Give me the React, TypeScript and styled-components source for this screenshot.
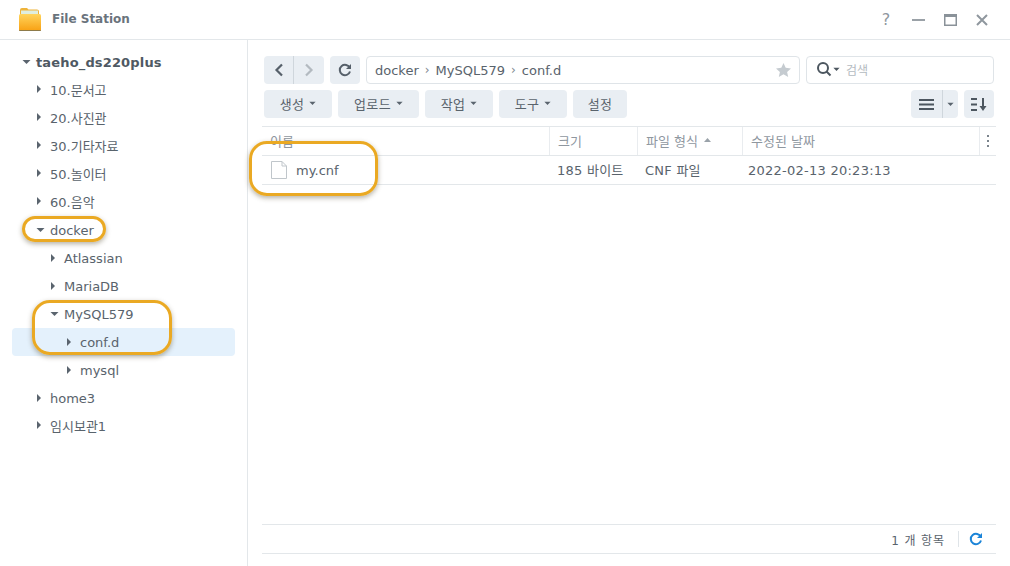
import React from "react";
import styled, { createGlobalStyle } from "styled-components";

const Global = createGlobalStyle`
  html, body { margin: 0; padding: 0; background: #fff; }
  body { font-family: "DejaVu Sans", "Noto Sans CJK KR", sans-serif; font-size: 13px; color: #4a5560; }
  * { box-sizing: border-box; }
`;
const Window = styled.div`
  position: relative; width: 1010px; height: 566px; display: flex; flex-direction: column; overflow: hidden; background: #fff;
`;
const TitleBar = styled.header`
  height: 40px; flex: none; display: flex; align-items: center; padding: 0 0 1px 18px; border-bottom: 1px solid #e3e7ea;
`;
const AppTitle = styled.div`
  margin-left: 10px; font-weight: 700; font-size: 12px; color: #6a737c; flex: 1;
`;
const WinButtons = styled.div`
  display: flex; align-items: center; padding: 2px 20px 0 0; gap: 16px;
`;
const WinButton = styled.span`
  width: 16px; height: 16px; display: flex; align-items: center; justify-content: center; color: #8f979e; font-size: 16px; line-height: 1;
`;
const Body = styled.div`
  flex: 1; display: flex; min-height: 0;
`;
const Sidebar = styled.nav`
  width: 248px; flex: none; border-right: 1px solid #e3e7ea; padding: 8px 12px 0;
`;
const TreeRow = styled.div<{ $depth: number; $selected?: boolean; $root?: boolean; $cjk?: boolean }>`
  height: 28px; display: flex; align-items: center; border-radius: 4px;
  padding-left: ${p => [10, 24, 38, 54][p.$depth]}px;
  padding-bottom: ${p => (p.$cjk ? 2 : 0)}px;
  background: ${p => (p.$selected ? "#e4f1fc" : "transparent")};
  font-weight: ${p => (p.$root ? 700 : 400)};
  color: ${p => (p.$root ? "#4f5963" : "#59636c")};
  font-size: 13px; letter-spacing: ${p => (p.$root ? ".15px" : "0")};
`;
const Caret = styled.span`
  width: 14px; flex: none; display: flex; align-items: center;
`;
const Main = styled.main`
  flex: 1; min-width: 0; display: flex; flex-direction: column; padding: 16px 14px 12px;
`;
const ToolRow = styled.div`
  display: flex; gap: 6px; height: 28px; margin: 0 2px 6px;
`;
const ToolButton = styled.button<{ $w: number; $cjk?: boolean }>`
  width: ${p => p.$w}px; height: 28px; border: 0; border-radius: 4px; background: #e9eef3; color: #59636c; padding: 0 0 ${p => (p.$cjk ? 2 : 0)}px;
  font: inherit; font-size: 13px; letter-spacing: .3px; display: flex; align-items: center; justify-content: center; gap: 5px; flex: none;
`;
const SplitButton = styled(ToolButton)`
  gap: 0;
`;
const SplitLine = styled.span`
  width: 1px; height: 28px; background: #cfd6dc; flex: none;
`;
const Segment = styled.span<{ $w: number }>`
  width: ${p => p.$w}px; height: 28px; display: flex; align-items: center; justify-content: center; flex: none;
`;
const Path = styled.div`
  flex: 1; height: 28px; border: 1px solid #dfe4e8; border-radius: 4px; display: flex; align-items: center; padding: 0 8px; gap: 6px;
  color: #59636c; font-size: 13px;
`;
const PathSep = styled.span`
  color: #7e8790; font-size: 12px;
`;
const Star = styled.span`
  margin-left: auto; display: flex;
`;
const SearchBox = styled.div`
  width: 188px; height: 28px; flex: none; border: 1px solid #dfe4e8; border-radius: 4px; display: flex; align-items: center; padding: 0 0 2px 9px; color: #b4bbc1; font-size: 12px;
`;
const SearchCaret = styled.span`
  margin-left: 1px; display: flex;
`;
const SearchText = styled.span`
  margin-left: 6px;
`;
const Spacer = styled.div`
  flex: 1;
`;
const Grid = styled.div`
  flex: 1; margin-top: 2px; display: flex; flex-direction: column; min-height: 0;
`;
const HeaderRow = styled.div`
  height: 30px; flex: none; display: grid; grid-template-columns: 288px 88px 105px 237px 16px; border-top: 1px solid #e3e7ea; border-bottom: 1px solid #e3e7ea;
`;
const HeadCell = styled.div`
  display: flex; align-items: center; padding: 0 0 2px 8px; color: #8f979f; font-size: 13px; border-right: 1px solid #e9ecef; gap: 6px;
  &:last-child { border-right: 0; padding: 0; justify-content: center; }
`;
const DataRow = styled.div`
  height: 29px; flex: none; display: grid; grid-template-columns: 288px 88px 105px 237px 16px; border-bottom: 1px solid #e3e7ea; color: #59636c;
`;
const DataCell = styled.div`
  display: flex; align-items: center; padding: 0 0 2px 7px; font-size: 13px; letter-spacing: .25px; white-space: nowrap;
`;
const DateCell = styled(DataCell)`
  padding: 0 0 0 5px;
`;
const NameCell = styled(DataCell)`
  padding: 0 0 0 9px; gap: 9px; letter-spacing: 0;
`;
const Footer = styled.footer`
  margin-top: auto; height: 30px; flex: none; border-top: 1px solid #e3e7ea; border-bottom: 1px solid #e3e7ea; display: flex; align-items: center; justify-content: flex-end; padding-right: 13px; font-size: 12px; color: #59636c; letter-spacing: .9px;
`;
const FootSep = styled.span`
  width: 1px; height: 16px; background: #dfe4e8; margin: 0 10px 0 13px;
`;
const Highlight = styled.div<{ $x: number; $y: number; $w: number; $h: number; $r: number }>`
  position: absolute; left: ${p => p.$x}px; top: ${p => p.$y}px; width: ${p => p.$w}px; height: ${p => p.$h}px;
  border: 3px solid #eaa923; border-radius: ${p => p.$r}px; box-shadow: 0 2px 5px rgba(70,60,30,.4); pointer-events: none;
`;

const Right = () => <svg width="6" height="10" viewBox="0 0 6 10"><path d="M1 1l4 4-4 4z" fill="#5a646e" /></svg>;
const Down = ({ c = "#5a646e", w = 9 }: { c?: string; w?: number }) => (
  <svg width={w} height={(w * 2) / 3} viewBox="0 0 9 6"><path d="M.5 1h8L4.500 5z" fill={c} /></svg>
);

const rows: { t: string; d: number; open?: boolean; sel?: boolean; root?: boolean; cjk?: boolean }[] = [
  { t: "taeho_ds220plus", d: 0, open: true, root: true },
  { t: "10.문서고", d: 1, cjk: true }, { t: "20.사진관", d: 1, cjk: true }, { t: "30.기타자료", d: 1, cjk: true }, { t: "50.놀이터", d: 1, cjk: true }, { t: "60.음악", d: 1, cjk: true },
  { t: "docker", d: 1, open: true },
  { t: "Atlassian", d: 2 }, { t: "MariaDB", d: 2 },
  { t: "MySQL579", d: 2, open: true },
  { t: "conf.d", d: 3, sel: true }, { t: "mysql", d: 3 },
  { t: "home3", d: 1 }, { t: "임시보관1", d: 1, cjk: true },
];

export default function App() {
  return (
    <Window>
      <Global />
      <TitleBar>
        <svg width="24" height="25" viewBox="0 0 24 25">
          <defs>
            <linearGradient id="fold" x1="0" y1="0" x2="0" y2="1">
              <stop offset="0" stopColor="#ffd45c" />
              <stop offset="1" stopColor="#f8a012" />
            </linearGradient>
          </defs>
          <path d="M2 5V3Q2 1 4 1h5l1.500 1.500H19q2 0 2 2V9H2z" fill="#eeb33a" />
          <rect x="3" y="3.500" width="17" height="6" fill="#dfeede" />
          <rect x="1" y="7" width="22" height="17" rx="1.500" fill="url(#fold)" />
          <path d="M1 23h22v.2q0 .8-1 .8H2q-1 0-1-.8z" fill="#8d7a4a" />
        </svg>
        <AppTitle>File Station</AppTitle>
        <WinButtons>
          <WinButton>?</WinButton>
          <WinButton><svg width="13" height="2"><rect width="13" height="2" fill="#9aa1a7" /></svg></WinButton>
          <WinButton><svg width="13" height="12"><rect x=".75" y=".75" width="11.500" height="10.500" fill="none" stroke="#8a9299" strokeWidth="1.500" /><rect width="13" height="3" fill="#8a9299" /></svg></WinButton>
          <WinButton><svg width="12" height="12"><path d="M1 1l10 10M11 1L1 11" stroke="#8f979e" strokeWidth="2" /></svg></WinButton>
        </WinButtons>
      </TitleBar>
      <Body>
        <Sidebar>
          {rows.map(r => (
            <TreeRow key={r.t} $depth={r.d} $selected={r.sel} $root={r.root} $cjk={r.cjk}>
              <Caret>{r.open ? <Down /> : <Right />}</Caret>
              {r.t}
            </TreeRow>
          ))}
        </Sidebar>
        <Main>
          <ToolRow>
            <SplitButton $w={60}>
              <Segment $w={29}><svg width="10" height="14" viewBox="0 0 10 14"><path d="M8 1.500L2.500 7 8 12.500" fill="none" stroke="#56606a" strokeWidth="2.200" /></svg></Segment>
              <SplitLine />
              <Segment $w={30}><svg width="10" height="14" viewBox="0 0 10 14"><path d="M2 1.500L7.500 7 2 12.500" fill="none" stroke="#b3bac0" strokeWidth="2.200" /></svg></Segment>
            </SplitButton>
            <ToolButton $w={30}>
              <svg width="14" height="14" viewBox="0 0 14 14"><path d="M11.800 5A5.200 5.200 0 1 0 12 8.500" fill="none" stroke="#56606a" strokeWidth="2" /><path d="M13 1v5H8z" fill="#56606a" /></svg>
            </ToolButton>
            <Path>
              docker<PathSep>›</PathSep>MySQL579<PathSep>›</PathSep>conf.d
              <Star><svg width="15" height="14" viewBox="0 0 15 14"><path d="M7.500 0l2.200 4.800 5.300.6-3.900 3.500 1.100 5.100-4.700-2.700L2.800 14l1.100-5.100L0 5.400l5.300-.6z" fill="#c5cbd0" /></svg></Star>
            </Path>
            <SearchBox>
              <svg width="16" height="16" viewBox="0 0 16 16"><circle cx="7" cy="7" r="5" fill="none" stroke="#4c565f" strokeWidth="2" /><path d="M10.500 10.500l4 4" stroke="#4c565f" strokeWidth="2" /></svg>
              <SearchCaret><Down c="#4c565f" w={7} /></SearchCaret>
              <SearchText>검색</SearchText>
            </SearchBox>
          </ToolRow>
          <ToolRow>
            <ToolButton $w={68} $cjk>생성 <Down w={7} /></ToolButton>
            <ToolButton $w={81} $cjk>업로드 <Down w={7} /></ToolButton>
            <ToolButton $w={68} $cjk>작업 <Down w={7} /></ToolButton>
            <ToolButton $w={68} $cjk>도구 <Down w={7} /></ToolButton>
            <ToolButton $w={54} $cjk>설정</ToolButton>
            <Spacer />
            <SplitButton $w={47}>
              <Segment $w={31}><svg width="15" height="11"><path d="M0 1h15M0 5.500h15M0 10h15" stroke="#4c565f" strokeWidth="2" /></svg></Segment>
              <SplitLine />
              <Segment $w={15}><Down w={7} /></Segment>
            </SplitButton>
            <ToolButton $w={30}>
              <svg width="16" height="13" viewBox="0 0 16 13"><path d="M0 1h6M0 6.500h6M0 12h6" stroke="#4c565f" strokeWidth="2" /><path d="M12 0v9" stroke="#4c565f" strokeWidth="2" /><path d="M8.500 8h7L12 13z" fill="#4c565f" /></svg>
            </ToolButton>
          </ToolRow>
          <Grid>
            <HeaderRow>
              <HeadCell>이름</HeadCell>
              <HeadCell>크기</HeadCell>
              <HeadCell>파일 형식 <svg width="7" height="4"><path d="M0 4h7L3.500 0z" fill="#9aa2a9" /></svg></HeadCell>
              <HeadCell>수정된 날짜</HeadCell>
              <HeadCell><svg width="2" height="12"><path d="M0 0h2v2H0zM0 5h2v2H0zM0 10h2v2H0z" fill="#7b848c" /></svg></HeadCell>
            </HeaderRow>
            <DataRow>
              <NameCell>
                <svg width="16" height="18" viewBox="0 0 16 18"><path d="M.5.500h10.500l4.500 4.500v12.500H.5zM11 .5V5h4.500" fill="#fff" stroke="#c0c6cb" /></svg>
                my.cnf
              </NameCell>
              <DataCell>185 바이트</DataCell>
              <DataCell>CNF 파일</DataCell>
              <DateCell>2022-02-13 20:23:13</DateCell>
              <DataCell />
            </DataRow>
            <Footer>
              1 개 항목
              <FootSep />
              <svg width="14" height="14" viewBox="0 0 14 14"><path d="M11.800 5A5.200 5.200 0 1 0 12 8.500" fill="none" stroke="#1b84d8" strokeWidth="2" /><path d="M13 1v5H8z" fill="#1b84d8" /></svg>
            </Footer>
          </Grid>
        </Main>
      </Body>
      <Highlight $x={22} $y={216} $w={84} $h={26} $r={13} />
      <Highlight $x={32} $y={300} $w={140} $h={55} $r={18} />
      <Highlight $x={249} $y={141} $w={129} $h={55} $r={18} />
    </Window>
  );
}
